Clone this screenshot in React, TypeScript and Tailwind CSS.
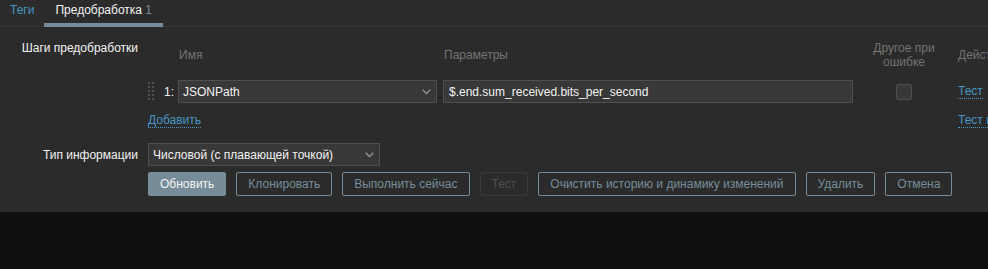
import React from "react";

function Chevron() {
  return (
    <svg width="9" height="6" viewBox="0 0 9 6" className="shrink-0">
      <path d="M0.8 0.8 L4.5 4.6 L8.2 0.8" fill="none" stroke="#9a9a9a" strokeWidth="1.3" />
    </svg>
  );
}

function Handle() {
  const dots = [];
  for (let r = 0; r < 5; r++) {
    for (let c = 0; c < 2; c++) {
      dots.push(<rect key={`${r}-${c}`} x={c * 4} y={r * 4} width="2" height="2" fill="#4f4f4f" />);
    }
  }
  return (
    <svg width="6" height="20" viewBox="0 0 6 20" className="shrink-0">
      {dots}
    </svg>
  );
}

export default function App() {
  return (
    <div className="w-[988px] h-[269px] overflow-hidden bg-[#0e1012] font-['Liberation_Sans',Arial,sans-serif] text-[12px] leading-[14px] text-[#f2f2f2]">
      <div className="bg-[#2b2b2b] pb-[16px]">
        {/* Tabs */}
        <div className="flex items-start h-[27px] border-b border-[#383838]">
          <div className="h-[26px] pt-[3px] pl-[10px] pr-[10px] text-[#4796c4]">Теги</div>
          <div className="h-[27px] pt-[3px] px-[11px] border-b-[4px] border-[#768d99]">
            Предобработка <span className="text-[#768d99]">1</span>
          </div>
        </div>

        {/* Preprocessing steps */}
        <div className="flex mt-[13px]">
          <div className="w-[138px] shrink-0 text-right pt-[1px]">Шаги предобработки</div>
          <div className="ml-[10px] flex flex-col">
            <div className="flex items-center h-[30px] text-[#737373] whitespace-nowrap">
              <div className="w-[30px] shrink-0" />
              <div className="w-[259px] shrink-0 pl-[1px]">Имя</div>
              <div className="w-[6px] shrink-0" />
              <div className="w-[410px] shrink-0 pl-[1px]">Параметры</div>
              <div className="w-[102px] shrink-0 text-center">
                Другое при
                <br />
                ошибке
              </div>
              <div className="ml-[3px]">Действия</div>
            </div>

            <div className="flex items-center h-[23px] mt-[10px] whitespace-nowrap">
              <div className="w-[30px] shrink-0 flex items-center">
                <Handle />
                <span className="ml-[10px]">1:</span>
              </div>
              <div className="w-[259px] h-[23px] shrink-0 flex items-center justify-between bg-[#383838] border border-[#4f4f4f] pl-[4px] pr-[5px]">
                <span>JSONPath</span>
                <Chevron />
              </div>
              <div className="w-[6px] shrink-0" />
              <div className="w-[410px] h-[23px] shrink-0 flex items-center bg-[#383838] border border-[#4f4f4f] px-[5px]">
                $.end.sum_received.bits_per_second
              </div>
              <div className="w-[102px] shrink-0 flex justify-center">
                <div className="w-[16px] h-[16px] bg-[#383838] border border-[#4f4f4f] rounded-[2px]" />
              </div>
              <div className="ml-[3px]">
                <span className="inline-block text-[#4796c4] border-b border-dotted border-[#4796c4]">Тест</span>
              </div>
            </div>

            <div className="flex mt-[10px] whitespace-nowrap">
              <div className="w-[807px] shrink-0">
                <span className="inline-block text-[#4796c4] border-b border-dotted border-[#4796c4]">Добавить</span>
              </div>
              <div className="ml-[3px]">
                <span className="inline-block text-[#4796c4] border-b border-dotted border-[#4796c4]">Тест всех шагов</span>
              </div>
            </div>
          </div>
        </div>

        {/* Type of information */}
        <div className="flex items-center mt-[15px]">
          <div className="w-[138px] shrink-0 text-right">Тип информации</div>
          <div className="ml-[10px] w-[232px] h-[23px] flex items-center justify-between bg-[#383838] border border-[#4f4f4f] pl-[4px] pr-[5px]">
            <span>Числовой (с плавающей точкой)</span>
            <Chevron />
          </div>
        </div>

        {/* Buttons */}
        <div className="flex ml-[148px] mt-[6px] gap-[10px] whitespace-nowrap">
          <div className="h-[24px] px-[11px] flex items-center rounded-[2px] bg-[#768d99] border border-[#768d99] text-[#f2f2f2]">Обновить</div>
          <div className="h-[24px] px-[11px] flex items-center rounded-[2px] border border-[#768d99] text-[#768d99]">Клонировать</div>
          <div className="h-[24px] px-[11px] flex items-center rounded-[2px] border border-[#768d99] text-[#768d99]">Выполнить сейчас</div>
          <div className="h-[24px] px-[11px] flex items-center rounded-[2px] border border-[#383838] text-[#4f4f4f]">Тест</div>
          <div className="h-[24px] px-[11px] flex items-center rounded-[2px] border border-[#768d99] text-[#768d99]">Очистить историю и динамику изменений</div>
          <div className="h-[24px] px-[11px] flex items-center rounded-[2px] border border-[#768d99] text-[#768d99]">Удалить</div>
          <div className="h-[24px] px-[11px] flex items-center rounded-[2px] border border-[#768d99] text-[#768d99]">Отмена</div>
        </div>
      </div>
    </div>
  );
}
